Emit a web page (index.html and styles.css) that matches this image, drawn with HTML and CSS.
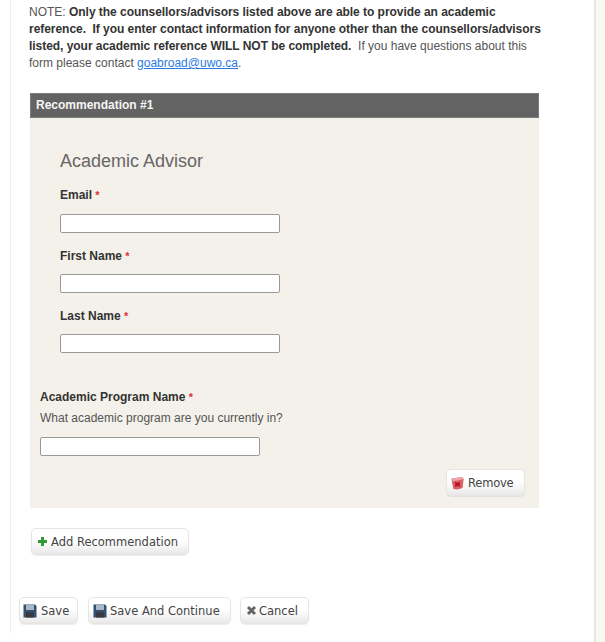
FILE: index.html
```html
<!DOCTYPE html>
<html lang="en">

<head>
    <meta charset="UTF-8">
    <meta name="viewport" content="width=device-width, initial-scale=1.0">
    <title>Academic Reference</title>
    <link rel="stylesheet" href="styles.css">
</head>

<body>
    <div class="page">
        <div class="main">
            <p class="note">NOTE: <strong>Only the counsellors/advisors listed above are able to provide an academic reference.&nbsp; If you enter contact information for anyone other than the counsellors/advisors listed, your academic reference WILL NOT be completed.</strong>&nbsp; If you have questions about this form please contact <a href="#">goabroad@uwo.ca</a>.</p>

            <div class="panel">
                <div class="panel-title">Recommendation #1</div>
                <div class="panel-body">
                    <div class="advisor">
                        <h2>Academic Advisor</h2>
                        <div class="field">
                            <label>Email <span class="req">*</span></label>
                            <input type="text">
                        </div>
                        <div class="field">
                            <label>First Name <span class="req">*</span></label>
                            <input type="text">
                        </div>
                        <div class="field">
                            <label>Last Name <span class="req">*</span></label>
                            <input type="text">
                        </div>
                    </div>

                    <div class="field program">
                        <label>Academic Program Name <span class="req">*</span></label>
                        <div class="hint">What academic program are you currently in?</div>
                        <input type="text">
                    </div>

                    <div class="remove-row">
                        <button class="btn btn-remove">
                            <svg width="15" height="16" viewBox="0 0 16 16">
                                <path d="M1.5 3.5 L13 1.5 L14.5 4 L13.5 13 Q8 16 3.5 14 Z" fill="#d9606a" />
                                <path d="M1.5 3.5 L13 1.5 L14.5 4 L3 6 Z" fill="#eda3a8" />
                                <path d="M5.5 7.5 L10.5 11.5 M10.5 7.5 L5.5 11.5" stroke="#b5101e" stroke-width="2" />
                            </svg>
                            Remove
                        </button>
                    </div>
                </div>
            </div>

            <div class="add-row">
                <button class="btn btn-add">
                    <svg width="11" height="11" viewBox="0 0 11 11">
                        <path d="M4 1 H7 V4 H10 V7 H7 V10 H4 V7 H1 V4 H4 Z" fill="#2f9a36" />
                    </svg>
                    Add Recommendation
                </button>
            </div>

            <div class="actions">
                <button class="btn btn-save">
                    <svg width="14" height="14" viewBox="0 0 14 14">
                        <path d="M0.5 0.5 H12 L13.5 2 V13.5 H0.5 Z" fill="#34506f" />
                        <rect x="3" y="1" width="8" height="5" fill="#a9b8c8" />
                        <rect x="3" y="8.5" width="8" height="5" fill="#39393f" />
                    </svg>
                    Save
                </button>
                <button class="btn btn-continue">
                    <svg width="14" height="14" viewBox="0 0 14 14">
                        <path d="M0.5 0.5 H12 L13.5 2 V13.5 H0.5 Z" fill="#34506f" />
                        <rect x="3" y="1" width="8" height="5" fill="#a9b8c8" />
                        <rect x="3" y="8.5" width="8" height="5" fill="#39393f" />
                    </svg>
                    Save And Continue
                </button>
                <button class="btn btn-cancel">
                    <svg width="11" height="11" viewBox="0 0 11 11">
                        <path d="M2 2 L9 9 M9 2 L2 9" stroke="#666" stroke-width="3" />
                    </svg>
                    Cancel
                </button>
            </div>
        </div>
        <div class="side"></div>
    </div>
</body>

</html>
```

FILE: styles.css
```css
html,
body {
    margin: 0;
    padding: 0;
}

body {
    font-family: "Liberation Sans", Arial, sans-serif;
    font-size: 12px;
    color: #555;
    background-color: #fff;
}

.page {
    display: flex;
    height: 642px;
    overflow: hidden;
}

.main {
    box-sizing: border-box;
    width: 584px;
    height: 633px;
    margin-left: 10px;
    border-left: 1px solid #f1efe9;
}

.side {
    flex: 1;
    background-color: #f9f7f1;
    border-left: 2px solid #e9e7e1;
}

.note {
    width: 520px;
    margin: 4px 0 0 18px;
    line-height: 17px;
}

.note strong {
    color: #333;
    letter-spacing: -0.04px;
}

.note a {
    color: #2a7ae2;
}

.panel {
    width: 509px;
    margin: 21px 0 0 19px;
}

.panel-title {
    box-sizing: border-box;
    height: 25px;
    padding-left: 5px;
    line-height: 23px;
    font-weight: bold;
    color: #f5f5f5;
    background-color: #636363;
    border: 1px solid #7b7b7b;
}

.panel-body {
    height: 389px;
    padding-top: 1px;
    background-color: #f4f1ea;
}

.advisor {
    padding: 30px 0 0 30px;
}

.advisor h2 {
    margin: 0;
    height: 24px;
    line-height: 24px;
    font-size: 18px;
    font-weight: normal;
    color: #666;
}

.field label {
    display: block;
    font-weight: bold;
    line-height: 16px;
    color: #333;
}

.req {
    font-size: 11px;
    color: #e0303a;
}

.field input {
    display: block;
    box-sizing: border-box;
    width: 220px;
    height: 19px;
    margin: 0;
    padding: 0 3px;
    background-color: #fff;
    border: 1px solid #999;
    border-radius: 2px;
}

.advisor .field {
    margin-top: 14px;
}

.advisor .field label {
    margin-bottom: 10px;
}

.advisor h2 + .field label {
    margin-bottom: 11px;
}

.advisor .field + .field {
    margin-top: 15px;
}

.program {
    margin: 36px 0 0 10px;
}

.hint {
    margin-top: 5px;
    line-height: 16px;
}

.program input {
    margin-top: 11px;
}

.remove-row {
    display: flex;
    justify-content: flex-end;
    margin: 13px 14px 0 0;
}

.btn {
    display: inline-flex;
    align-items: center;
    box-sizing: border-box;
    height: 27px;
    margin: 0;
    padding: 0;
    font-family: "DejaVu Sans", Verdana, sans-serif;
    font-size: 11.5px;
    color: #444;
    white-space: nowrap;
    background: linear-gradient(#fff 45%, #e9e9e9);
    border: 1px solid #e6e5e1;
    border-radius: 5px;
    box-shadow: 0 1px 1px rgba(0, 0, 0, 0.08);
}

.btn-remove {
    width: 79px;
    gap: 3px;
    padding-left: 3px;
    letter-spacing: -0.2px;
}

.add-row {
    margin: 20px 0 0 20px;
}

.btn-add {
    width: 158px;
    gap: 3px;
    padding-left: 5px;
}

.actions {
    display: flex;
    margin: 42px 0 0 8px;
}

.btn-save {
    width: 59px;
    gap: 4px;
    padding-left: 3px;
}

.btn-continue {
    width: 143px;
    gap: 3px;
    margin-left: 10px;
    padding-left: 4px;
}

.btn-cancel {
    width: 69px;
    gap: 2px;
    margin-left: 9px;
    padding-left: 5px;
}
```
